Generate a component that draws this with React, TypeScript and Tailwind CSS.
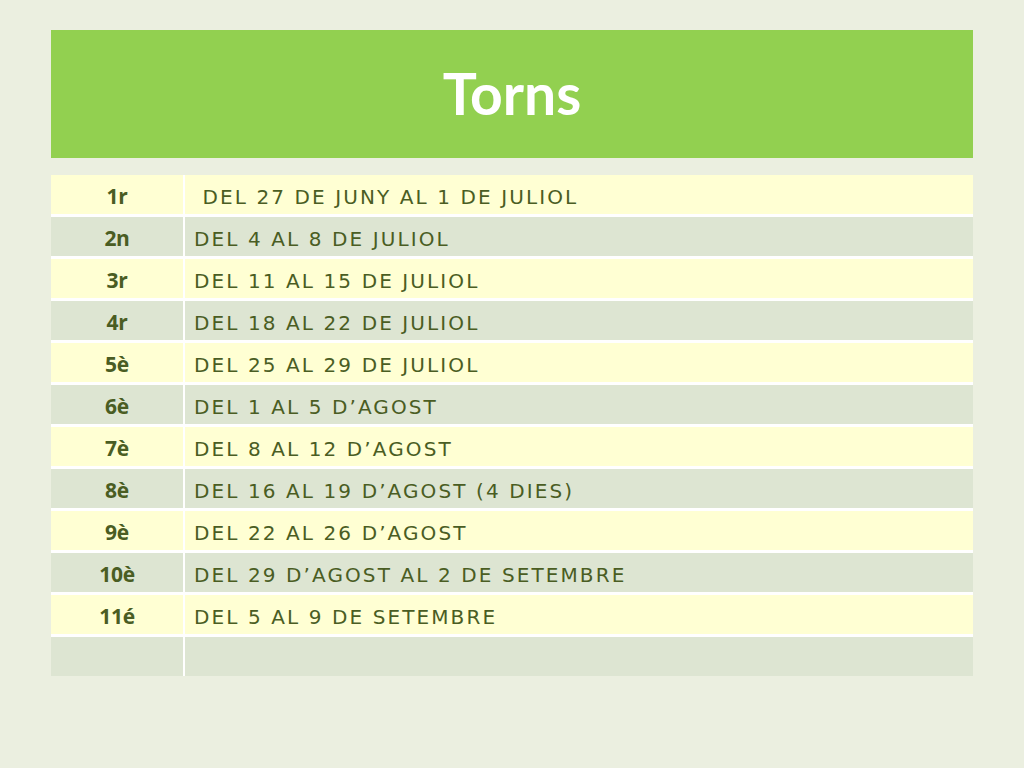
import React from 'react';

const rows: [string, string][] = [
  ['1r', '\u00a0DEL 27 DE JUNY AL 1 DE JULIOL'],
  ['2n', 'DEL 4 AL 8 DE JULIOL'],
  ['3r', 'DEL 11 AL 15 DE JULIOL'],
  ['4r', 'DEL 18 AL 22 DE JULIOL'],
  ['5è', 'DEL 25 AL 29 DE JULIOL'],
  ['6è', 'DEL 1 AL 5 D\u2019AGOST'],
  ['7è', 'DEL 8 AL 12 D\u2019AGOST'],
  ['8è', 'DEL 16 AL 19 D\u2019AGOST (4 DIES)'],
  ['9è', 'DEL 22 AL 26 D\u2019AGOST'],
  ['10è', 'DEL 29 D\u2019AGOST AL 2 DE SETEMBRE'],
  ['11é', 'DEL 5 AL 9 DE SETEMBRE'],
  ['', ''],
];

const App: React.FC = () => {
  return (
    <div className="w-[1024px] h-[768px] bg-[#ebefe0] pt-[30px] pl-[51px]">
      {/* Title bar */}
      <div className="w-[922px] h-[128px] bg-[#92d050] flex items-center justify-center">
        <h1 className="text-white font-bold text-[57px] leading-none pb-[2px] font-['Lato',sans-serif]">Torns</h1>
      </div>

      {/* Table */}
      <div className="mt-[17px] w-[922px] grid grid-cols-[132px_1fr] gap-x-[2px] gap-y-[3px] bg-white">
        {rows.map(([n, text], i) => {
          const bg = i % 2 === 0 ? 'bg-[#ffffd3]' : 'bg-[#dde5d2]';
          return (
            <React.Fragment key={i}>
              <div
                className={`${bg} h-[39px] flex items-center justify-center pt-[4px] text-[21px] font-bold text-[#4a5d23] font-['Open_Sans',sans-serif] tracking-[-0.3px]`}
              >
                {n}
              </div>
              <div
                className={`${bg} h-[39px] flex items-center pl-[9px] pt-[4px] text-[20px] text-[#4a5d23] font-['DejaVu_Sans',sans-serif] tracking-[2.1px] whitespace-pre`}
              >
                {text}
              </div>
            </React.Fragment>
          );
        })}
      </div>
    </div>
  );
};

export default App;
